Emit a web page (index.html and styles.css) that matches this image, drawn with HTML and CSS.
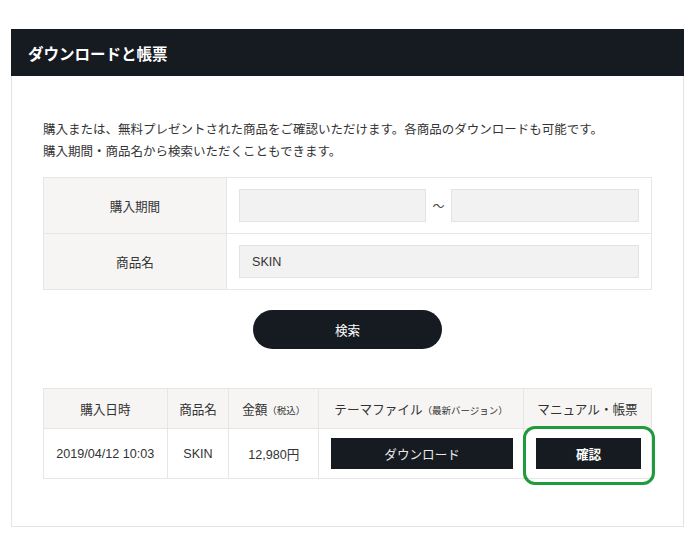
FILE: index.html
```html
<!DOCTYPE html>
<html lang="ja">
<head>
<meta charset="utf-8">
<title>ダウンロードと帳票</title>
<link rel="stylesheet" href="styles.css">
</head>
<body>
<section class="panel">
  <h1 class="panel-title">ダウンロードと帳票</h1>
  <div class="panel-body">
    <p class="intro">購入または、無料プレゼントされた商品をご確認いただけます。各商品のダウンロードも可能です。<br>購入期間・商品名から検索いただくこともできます。</p>
    <table class="search">
      <tr>
        <th>購入期間</th>
        <td>
          <div class="range">
            <span class="field"></span>
            <span class="tilde">～</span>
            <span class="field"></span>
          </div>
        </td>
      </tr>
      <tr>
        <th>商品名</th>
        <td><span class="field wide">SKIN</span></td>
      </tr>
    </table>
    <div class="search-actions"><button class="btn-search">検索</button></div>
    <table class="results">
      <tr>
        <th class="c-date">購入日時</th>
        <th class="c-name">商品名</th>
        <th class="c-price">金額<small>（税込）</small></th>
        <th class="c-file">テーマファイル<small>（最新バージョン）</small></th>
        <th class="c-doc">マニュアル・帳票</th>
      </tr>
      <tr>
        <td>2019/04/12 10:03</td>
        <td>SKIN</td>
        <td>12,980円</td>
        <td><button class="btn-dark btn-dl">ダウンロード</button></td>
        <td class="doc-cell"><button class="btn-dark btn-confirm">確認</button><span class="highlight"></span></td>
      </tr>
    </table>
  </div>
</section>
</body>
</html>
```
FILE: styles.css
```css
* { box-sizing: border-box; }
body {
  margin: 0;
  background: #fff;
  font-family: "Liberation Sans", "Noto Sans CJK JP", sans-serif;
  color: #333;
}
.panel {
  margin: 29px 0 0 11px;
  width: 673px;
  border: 1px solid #e4e4e4;
  border-top: 0;
}
.panel-title {
  margin: 0 -1px;
  height: 47px;
  background: #161b21;
  color: #fff;
  font-size: 15.5px;
  font-weight: bold;
  display: flex;
  align-items: center;
  padding-left: 17px;
}
.panel-body {
  padding: 43px 31px 47px 31px;
}
.intro {
  margin: 0;
  font-size: 12.5px;
  line-height: 22px;
  color: #333;
}
.search {
  margin-top: 14px;
  width: 609px;
  border-collapse: collapse;
}
.search th, .search td {
  border: 1px solid #e6e6e6;
  height: 56px;
  padding: 0 12px;
  vertical-align: middle;
}
.search th {
  width: 184px;
  background: #f6f5f3;
  font-weight: normal;
  font-size: 12.6px;
  color: #333;
}
.range {
  display: flex;
  align-items: center;
}
.field {
  display: flex;
  align-items: center;
  height: 33px;
  width: 187px;
  background: #f2f2f2;
  border: 1px solid #e3e3e3;
  padding-left: 12px;
  font-size: 12.6px;
  color: #333;
}
.range .field:last-child { width: 188px; }
.field.wide { width: 400px; }
.tilde {
  width: 25px;
  text-align: center;
  font-size: 12px;
  color: #444;
}
.search-actions {
  display: flex;
  justify-content: center;
  margin-top: 20px;
}
.btn-search {
  width: 189px;
  height: 39px;
  border: 0;
  border-radius: 20px;
  background: #161b21;
  color: #fff;
  font-family: inherit;
  font-size: 12.6px;
}
.results {
  margin-top: 39px;
  width: 609px;
  border-collapse: collapse;
  font-size: 12.6px;
}
.results th, .results td {
  border: 1px solid #e6e6e6;
  text-align: center;
  vertical-align: middle;
  padding: 0;
}
.results th {
  height: 40px;
  background: #f6f5f3;
  font-weight: normal;
  color: #333;
}
.results td { height: 50px; }
.results small { font-size: 9.5px; }
.c-date { width: 124px; }
.c-name { width: 62px; }
.c-price { width: 90px; }
.c-file { width: 205px; }
.c-doc { width: 128px; }
.btn-dark {
  display: block;
  height: 31px;
  border: 0;
  background: #161b21;
  color: #e8e8e8;
  font-family: inherit;
  font-size: 12.6px;
}
.btn-dl { width: 182px; margin-left: 12px; }
.btn-confirm { width: 105px; margin-left: 12px; color: #fff; font-weight: bold; }
.doc-cell { position: relative; }
.highlight {
  position: absolute;
  left: -1px;
  top: -3px;
  width: 132px;
  height: 59px;
  border: 3px solid #1f9a3c;
  border-radius: 12px;
}
```
